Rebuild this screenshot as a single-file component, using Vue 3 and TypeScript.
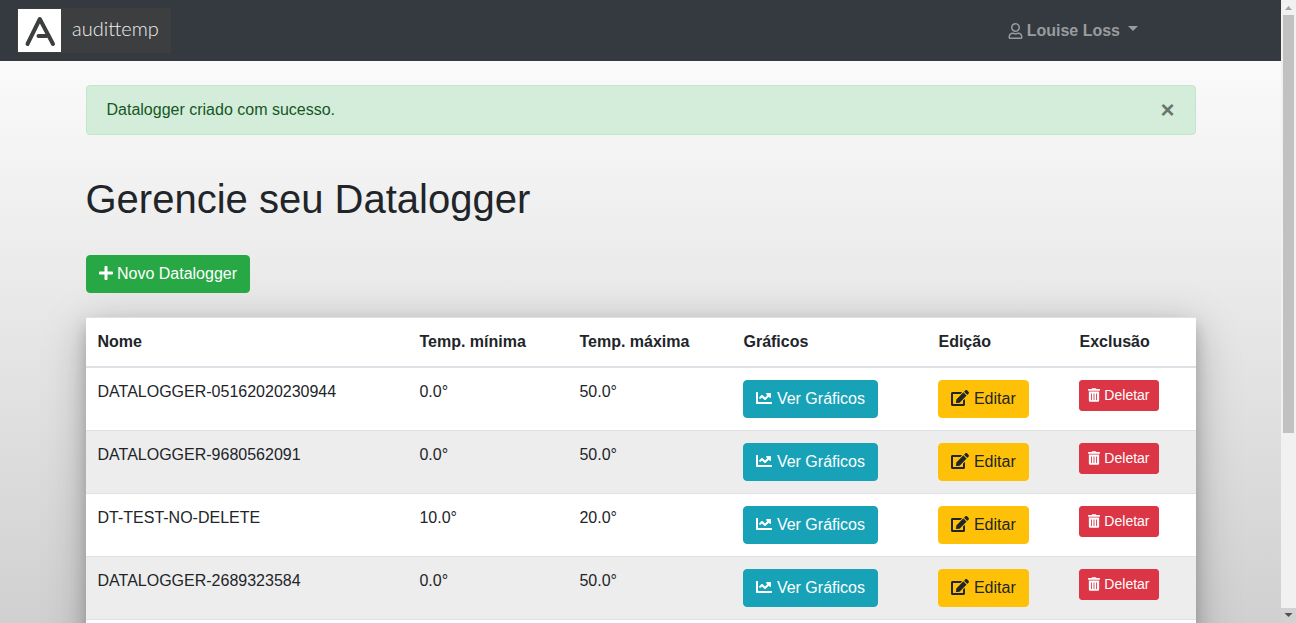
<script setup lang="ts">
import { ref } from 'vue'

interface Datalogger {
  name: string
  min: string
  max: string
}

const dataloggers: Datalogger[] = [
  { name: 'DATALOGGER-05162020230944', min: '0.0°', max: '50.0°' },
  { name: 'DATALOGGER-9680562091', min: '0.0°', max: '50.0°' },
  { name: 'DT-TEST-NO-DELETE', min: '10.0°', max: '20.0°' },
  { name: 'DATALOGGER-2689323584', min: '0.0°', max: '50.0°' },
]

const alertOpen = ref(true)
</script>

<template>
  <div class="window">
    <div class="page">
      <nav class="navbar">
        <a class="brand" href="#" aria-label="audittemp">
          <svg class="brand-mark" viewBox="0 0 43 43" aria-hidden="true">
            <rect width="43" height="43" fill="#fff" />
            <path
              d="M9.5 35L21.8 10L35 35M20.5 27H28.5"
              fill="none"
              stroke="#3d3e3f"
              stroke-width="4"
              stroke-linecap="round"
              stroke-linejoin="round"
            />
          </svg>
          <span class="brand-name">audittemp</span>
        </a>
        <button class="user" type="button" aria-haspopup="true">
          <svg class="icon" width="15" height="16" viewBox="0 0 448 512" aria-hidden="true">
            <path d="M313.6 304c-28.7 0-42.5 16-89.6 16-47.1 0-60.8-16-89.6-16C60.2 304 0 364.2 0 438.4V464c0 26.5 21.5 48 48 48h352c26.5 0 48-21.5 48-48v-25.6c0-74.2-60.2-134.4-134.4-134.4zM400 464H48v-25.6c0-47.6 38.8-86.4 86.4-86.4 14.6 0 38.3 16 89.6 16 51.7 0 74.9-16 89.6-16 47.6 0 86.4 38.8 86.4 86.4V464zM224 288c79.5 0 144-64.5 144-144S303.5 0 224 0 80 64.5 80 144s64.5 144 144 144zm0-240c52.9 0 96 43.1 96 96s-43.1 96-96 96-96-43.1-96-96 43.1-96 96-96z" />
          </svg>
          <span>Louise Loss</span>
          <span class="caret"></span>
        </button>
      </nav>

      <main class="container">
        <div v-if="alertOpen" class="alert" role="alert">
          <span>Datalogger criado com sucesso.</span>
          <button class="close" type="button" aria-label="Fechar" @click="alertOpen = false">×</button>
        </div>

        <h1>Gerencie seu Datalogger</h1>

        <a class="btn btn-success" href="#">
          <svg class="icon" width="14" height="16" viewBox="0 0 448 512" aria-hidden="true">
            <path d="M416 208H272V64c0-17.67-14.33-32-32-32h-32c-17.67 0-32 14.33-32 32v144H32c-17.67 0-32 14.33-32 32v32c0 17.67 14.33 32 32 32h144v144c0 17.67 14.33 32 32 32h32c17.67 0 32-14.33 32-32V304h144c17.67 0 32-14.33 32-32v-32c0-17.67-14.33-32-32-32z" />
          </svg>
          Novo Datalogger
        </a>

        <table>
          <colgroup>
            <col class="c-name" />
            <col class="c-min" />
            <col class="c-max" />
            <col class="c-chart" />
            <col class="c-edit" />
            <col class="c-delete" />
          </colgroup>
          <thead>
            <tr>
              <th scope="col">Nome</th>
              <th scope="col">Temp. mínima</th>
              <th scope="col">Temp. máxima</th>
              <th scope="col">Gráficos</th>
              <th scope="col">Edição</th>
              <th scope="col">Exclusão</th>
            </tr>
          </thead>
          <tbody>
            <tr v-for="d in dataloggers" :key="d.name">
              <td>{{ d.name }}</td>
              <td>{{ d.min }}</td>
              <td>{{ d.max }}</td>
              <td>
                <a class="btn btn-info" href="#">
                  <svg class="icon" width="16" height="16" viewBox="0 0 512 512" aria-hidden="true">
                    <path d="M496 384H64V80c0-8.84-7.16-16-16-16H16C7.16 64 0 71.16 0 80v336c0 17.67 14.33 32 32 32h464c8.84 0 16-7.16 16-16v-32c0-8.84-7.16-16-16-16zM464 96H345.94c-21.38 0-32.09 25.85-16.97 40.97l32.4 32.4L288 242.75l-73.37-73.37c-12.5-12.5-32.76-12.5-45.25 0l-68.69 68.69c-6.25 6.25-6.25 16.38 0 22.63l22.62 22.62c6.25 6.25 16.38 6.25 22.63 0L192 237.25l73.37 73.37c12.5 12.5 32.76 12.5 45.25 0l96-96 32.4 32.4c15.12 15.12 40.97 4.41 40.97-16.97V112c.01-8.84-7.15-16-15.99-16z" />
                  </svg>
                  Ver Gráficos
                </a>
              </td>
              <td>
                <a class="btn btn-warning" href="#">
                  <svg class="icon" width="18" height="16" viewBox="0 0 576 512" aria-hidden="true">
                    <path d="M402.6 83.2l90.2 90.2c3.8 3.8 3.8 10 0 13.8L274.4 405.6l-92.8 10.3c-12.4 1.4-22.9-9.1-21.5-21.5l10.3-92.8L388.8 83.2c3.8-3.8 10-3.8 13.8 0zm162-22.9l-48.8-48.8c-15.2-15.2-39.9-15.2-55.2 0l-35.4 35.4c-3.8 3.8-3.8 10 0 13.8l90.2 90.2c3.8 3.8 10 3.8 13.8 0l35.4-35.4c15.2-15.3 15.2-40 0-55.2zM384 346.2V448H64V128h229.8c3.2 0 6.2-1.3 8.5-3.5l40-40c7.6-7.6 2.2-20.5-8.5-20.5H48C21.5 64 0 85.5 0 112v352c0 26.5 21.5 48 48 48h352c26.5 0 48-21.5 48-48V306.2c0-10.7-12.9-16-20.5-8.5l-40 40c-2.2 2.3-3.5 5.3-3.5 8.5z" />
                  </svg>
                  Editar
                </a>
              </td>
              <td>
                <button class="btn btn-sm btn-danger" type="button">
                  <svg class="icon" width="12" height="14" viewBox="0 0 448 512" aria-hidden="true">
                    <path d="M32 464a48 48 0 0 0 48 48h288a48 48 0 0 0 48-48V128H32zm272-256a16 16 0 0 1 32 0v224a16 16 0 0 1-32 0zm-96 0a16 16 0 0 1 32 0v224a16 16 0 0 1-32 0zm-96 0a16 16 0 0 1 32 0v224a16 16 0 0 1-32 0zM432 32H312l-9.4-18.7A24 24 0 0 0 281.1 0H166.8a23.72 23.72 0 0 0-21.4 13.3L136 32H16A16 16 0 0 0 0 48v32a16 16 0 0 0 16 16h416a16 16 0 0 0 16-16V48a16 16 0 0 0-16-16z" />
                  </svg>
                  Deletar
                </button>
              </td>
            </tr>
          </tbody>
          <tfoot>
            <tr>
              <td class="table-end" colspan="6"></td>
            </tr>
          </tfoot>
        </table>
      </main>
    </div>

    <div class="scrollbar" aria-hidden="true">
      <svg class="arrow" viewBox="0 0 15 15"><path d="M4 10L7.5 6L11 10z" fill="#a3a3a3" /></svg>
      <div class="track"><div class="thumb"></div></div>
      <svg class="arrow arrow-down" viewBox="0 0 15 15"><path d="M3.5 5L7.5 9L11.5 5z" fill="#505050" /></svg>
    </div>
  </div>
</template>

<style>
body {
  margin: 0;
}
</style>

<style scoped>
* {
  box-sizing: border-box;
}

.window {
  display: flex;
  height: 100vh;
  overflow: hidden;
  font-family: "Liberation Sans", Arial, sans-serif;
  font-size: 16px;
  line-height: 24px;
  color: #212529;
}

.page {
  flex: 1;
  min-width: 0;
  overflow-y: auto;
  scrollbar-width: none;
  background: linear-gradient(#fff, #d0d0d0);
}

.navbar {
  display: flex;
  align-items: center;
  justify-content: space-between;
  height: 61px;
  padding: 0 143px 0 17px;
  background: #343a40;
}

.brand {
  display: flex;
  align-items: center;
  width: 154px;
  height: 45px;
  padding-left: 1px;
  background: #3d3e3f;
  color: #eee;
  text-decoration: none;
}

.brand-mark {
  width: 43px;
  height: 43px;
  margin-right: 11px;
}

.brand-name {
  font-family: Lato, sans-serif;
  font-weight: 300;
  font-size: 20px;
  padding-bottom: 6px;
}

.user {
  display: flex;
  align-items: center;
  gap: 4px;
  padding: 0;
  border: 0;
  background: none;
  color: #999c9f;
  font: inherit;
  font-weight: bold;
}

.caret {
  margin: 0 0 4px 4px;
  border: 5px solid transparent;
  border-top: 5px solid;
  border-bottom: 0;
}

.icon {
  fill: currentColor;
  vertical-align: -2px;
}

.container {
  max-width: 1140px;
  margin: 0 auto;
  padding: 24px 15px;
}

.alert {
  display: flex;
  justify-content: space-between;
  align-items: center;
  height: 50px;
  padding: 0 20px;
  border: 1px solid #c3e6cb;
  border-radius: 4px;
  background: #d4edda;
  color: #155724;
}

.close {
  padding: 0;
  border: 0;
  background: none;
  color: #000;
  font: inherit;
  font-size: 24px;
  font-weight: bold;
  opacity: 0.5;
}

h1 {
  margin: 40px 0 32px;
  font-size: 40px;
  font-weight: normal;
  line-height: 48px;
}

.btn {
  display: inline-block;
  padding: 6px 12px;
  border: 1px solid;
  border-radius: 4px;
  color: #fff;
  font: inherit;
  text-decoration: none;
  white-space: nowrap;
  vertical-align: top;
}

.btn-sm {
  padding: 4px 8px;
  border-radius: 3px;
  font-size: 14px;
  line-height: 21px;
}

.btn-success {
  border-color: #28a745;
  background: #28a745;
}

.btn-info {
  border-color: #17a2b8;
  background: #17a2b8;
}

.btn-warning {
  border-color: #ffc107;
  background: #ffc107;
  color: #212529;
}

.btn-danger {
  border-color: #dc3545;
  background: #dc3545;
}

table {
  width: 100%;
  margin-top: 24px;
  border-collapse: collapse;
  table-layout: fixed;
  background: #fff;
  box-shadow: 0 10px 40px rgba(0, 0, 0, 0.25), 0 8px 14px rgba(0, 0, 0, 0.18);
}

.c-name {
  width: 29%;
}

.c-min {
  width: 160px;
}

.c-max {
  width: 164px;
}

.c-chart {
  width: 195px;
}

.c-edit {
  width: 141px;
}

.c-delete {
  width: 128px;
}

th,
td {
  padding: 12px;
  border-top: 1px solid #dee2e6;
  text-align: left;
  vertical-align: top;
}

th {
  border-bottom: 2px solid #dee2e6;
}

tbody tr:nth-child(even) {
  background: #ededed;
}

.table-end {
  height: 63px;
}

.scrollbar {
  display: flex;
  flex-direction: column;
  width: 15px;
  background: #f1f1f1;
}

.arrow {
  width: 15px;
  height: 15px;
}

.arrow-down {
  background: #d2d2d2;
}

.track {
  flex: 1;
  padding: 0 2px;
}

.thumb {
  height: 70.5%;
  background: #c1c1c1;
}
</style>
